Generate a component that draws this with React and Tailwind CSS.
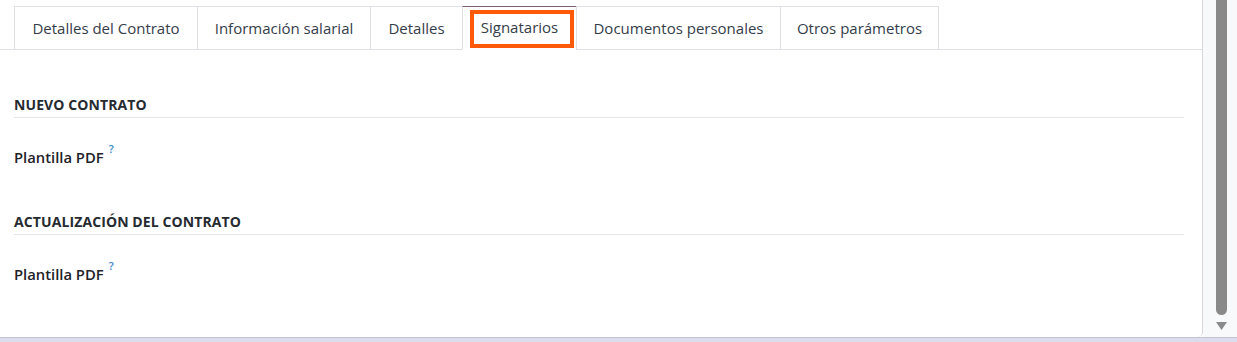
import React from "react";

const tabs = [
  { label: "Detalles del Contrato", w: "w-[183px]" },
  { label: "Información salarial", w: "w-[173px]" },
  { label: "Detalles", w: "w-[92px]" },
  { label: "Signatarios", w: "w-[114px]", active: true },
  { label: "Documentos personales", w: "w-[204px]" },
  { label: "Otros parámetros", w: "w-[159px]", last: true },
];

function Section({ title }) {
  return (
    <div className="mt-[45px]">
      <div className="text-[14px] leading-[20px] font-bold text-[#262a31] pb-[2px] border-b border-[#e3e4e7] tracking-[0.1px]">
        {title}
      </div>
      <div className="mt-[29px] flex items-start text-[14.8px] leading-[20px] font-semibold text-[#1f2228]">
        <span>Plantilla PDF</span>
        <sup className="ml-[5px] mt-[-4px] text-[11px] leading-[11px] font-semibold text-[#3a86c4] top-0">?</sup>
      </div>
    </div>
  );
}

export default function App() {
  return (
    <div
      className="w-[1237px] h-[342px] flex flex-col bg-white overflow-hidden"
      style={{ fontFamily: '"Open Sans", "Noto Sans", sans-serif' }}
    >
      <div className="flex flex-1 min-h-0">
        <div className="flex-1 flex flex-col border-r border-[#d6d7db] rounded-br-[5px] pt-[6px]">
          <div className="flex pl-[14px] border-b border-[#dee0e3] h-[44px]">
            {tabs.map((t) => (
              <div
                key={t.label}
                className={
                  "relative h-[44px] flex items-center justify-center text-[15px] text-[#353d4a] border-l border-t " +
                  t.w +
                  (t.last ? " border-r border-r-[#dee0e3]" : "") +
                  (t.active
                    ? " border-t-[#7a5a78] border-l-[#dee0e3] bg-white border-b border-b-white -mb-px"
                    : " border-[#dee0e3]")
                }
              >
                <span className="-mt-[1px]">{t.label}</span>
                {t.active && (
                  <div className="absolute left-[7px] right-[2px] top-[3px] bottom-[1px] border-[4px] border-[#ff5a0a] pointer-events-none" />
                )}
              </div>
            ))}
          </div>
          <div className="pl-[14px] pr-[18px]">
            <Section title="NUEVO CONTRATO" />
            <Section title="ACTUALIZACIÓN DEL CONTRATO" />
          </div>
        </div>
        <div className="w-[34px] bg-[#f8f9fb] flex flex-col pl-[13px]">
          <div className="w-[11px] h-[315px] bg-[#898989] rounded-b-[6px]" />
          <svg width="11" height="8" viewBox="0 0 11 8" className="mt-[7px]">
            <polygon points="0,0 11,0 5.5,8" fill="#8a8a8a" />
          </svg>
        </div>
      </div>
      <div className="h-[1px] bg-[#c3c3cb]" />
      <div className="h-[4px] bg-[#dcdcef]" />
    </div>
  );
}
